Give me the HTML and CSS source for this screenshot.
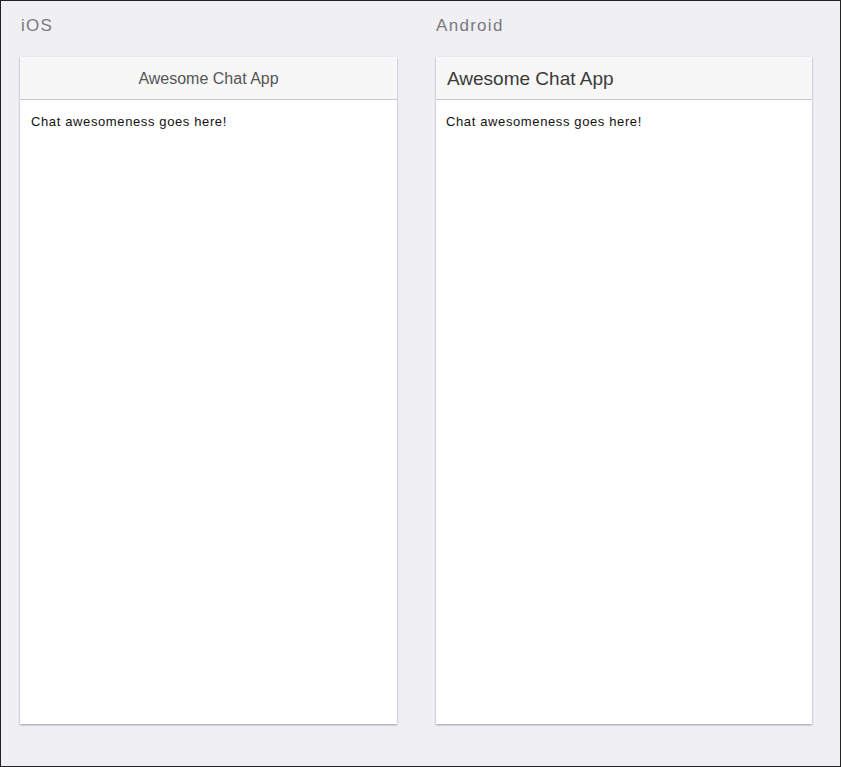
FILE: index.html
```html
<!DOCTYPE html>
<html>
<head>
<meta charset="utf-8">
<link rel="stylesheet" href="styles.css">
</head>
<body>
<div class="frame">
  <div class="column">
    <div class="label">iOS</div>
    <div class="device">
      <div class="bar bar-ios">Awesome Chat App</div>
      <div class="content">Chat awesomeness goes here!</div>
    </div>
  </div>
  <div class="column">
    <div class="label">Android</div>
    <div class="device">
      <div class="bar bar-android">Awesome Chat App</div>
      <div class="content">Chat awesomeness goes here!</div>
    </div>
  </div>
</div>
</body>
</html>
```
FILE: styles.css
```css
html, body {
  margin: 0;
  padding: 0;
}
body {
  width: 841px;
  height: 767px;
  font-family: "Liberation Sans", Arial, sans-serif;
}
.frame {
  box-sizing: border-box;
  width: 841px;
  height: 767px;
  border: 1px solid #222;
  background: #efeff4;
  display: grid;
  grid-template-columns: 377px 376px;
  column-gap: 39px;
  padding: 0 0 0 19px;
}
.column {
  display: flex;
  flex-direction: column;
}
.label {
  height: 56px;
  box-sizing: border-box;
  padding-top: 15px;
  padding-left: 1px;
  font-size: 17px;
  letter-spacing: 1.3px;
  color: #7a7a7e;
}
.column + .column .label {
  padding-left: 0;
}
.device {
  height: 667px;
  background: #fff;
  box-shadow: 0 1px 2px rgba(0, 0, 0, 0.35);
  display: flex;
  flex-direction: column;
}
.bar {
  height: 43px;
  box-sizing: border-box;
  border-bottom: 1px solid #c8c7cc;
  background: #f7f7f7;
  display: flex;
  align-items: center;
}
.bar-ios {
  justify-content: center;
  font-size: 16px;
  color: #555;
  padding-top: 1px;
}
.bar-android {
  padding-left: 11px;
  font-size: 19px;
  color: #3a3a3a;
  padding-top: 1px;
}
.content {
  padding: 14px 11px 13px;
  font-size: 13px;
  letter-spacing: 0.62px;
  color: #111;
}
.column + .column .content {
  padding-left: 10px;
}
```
